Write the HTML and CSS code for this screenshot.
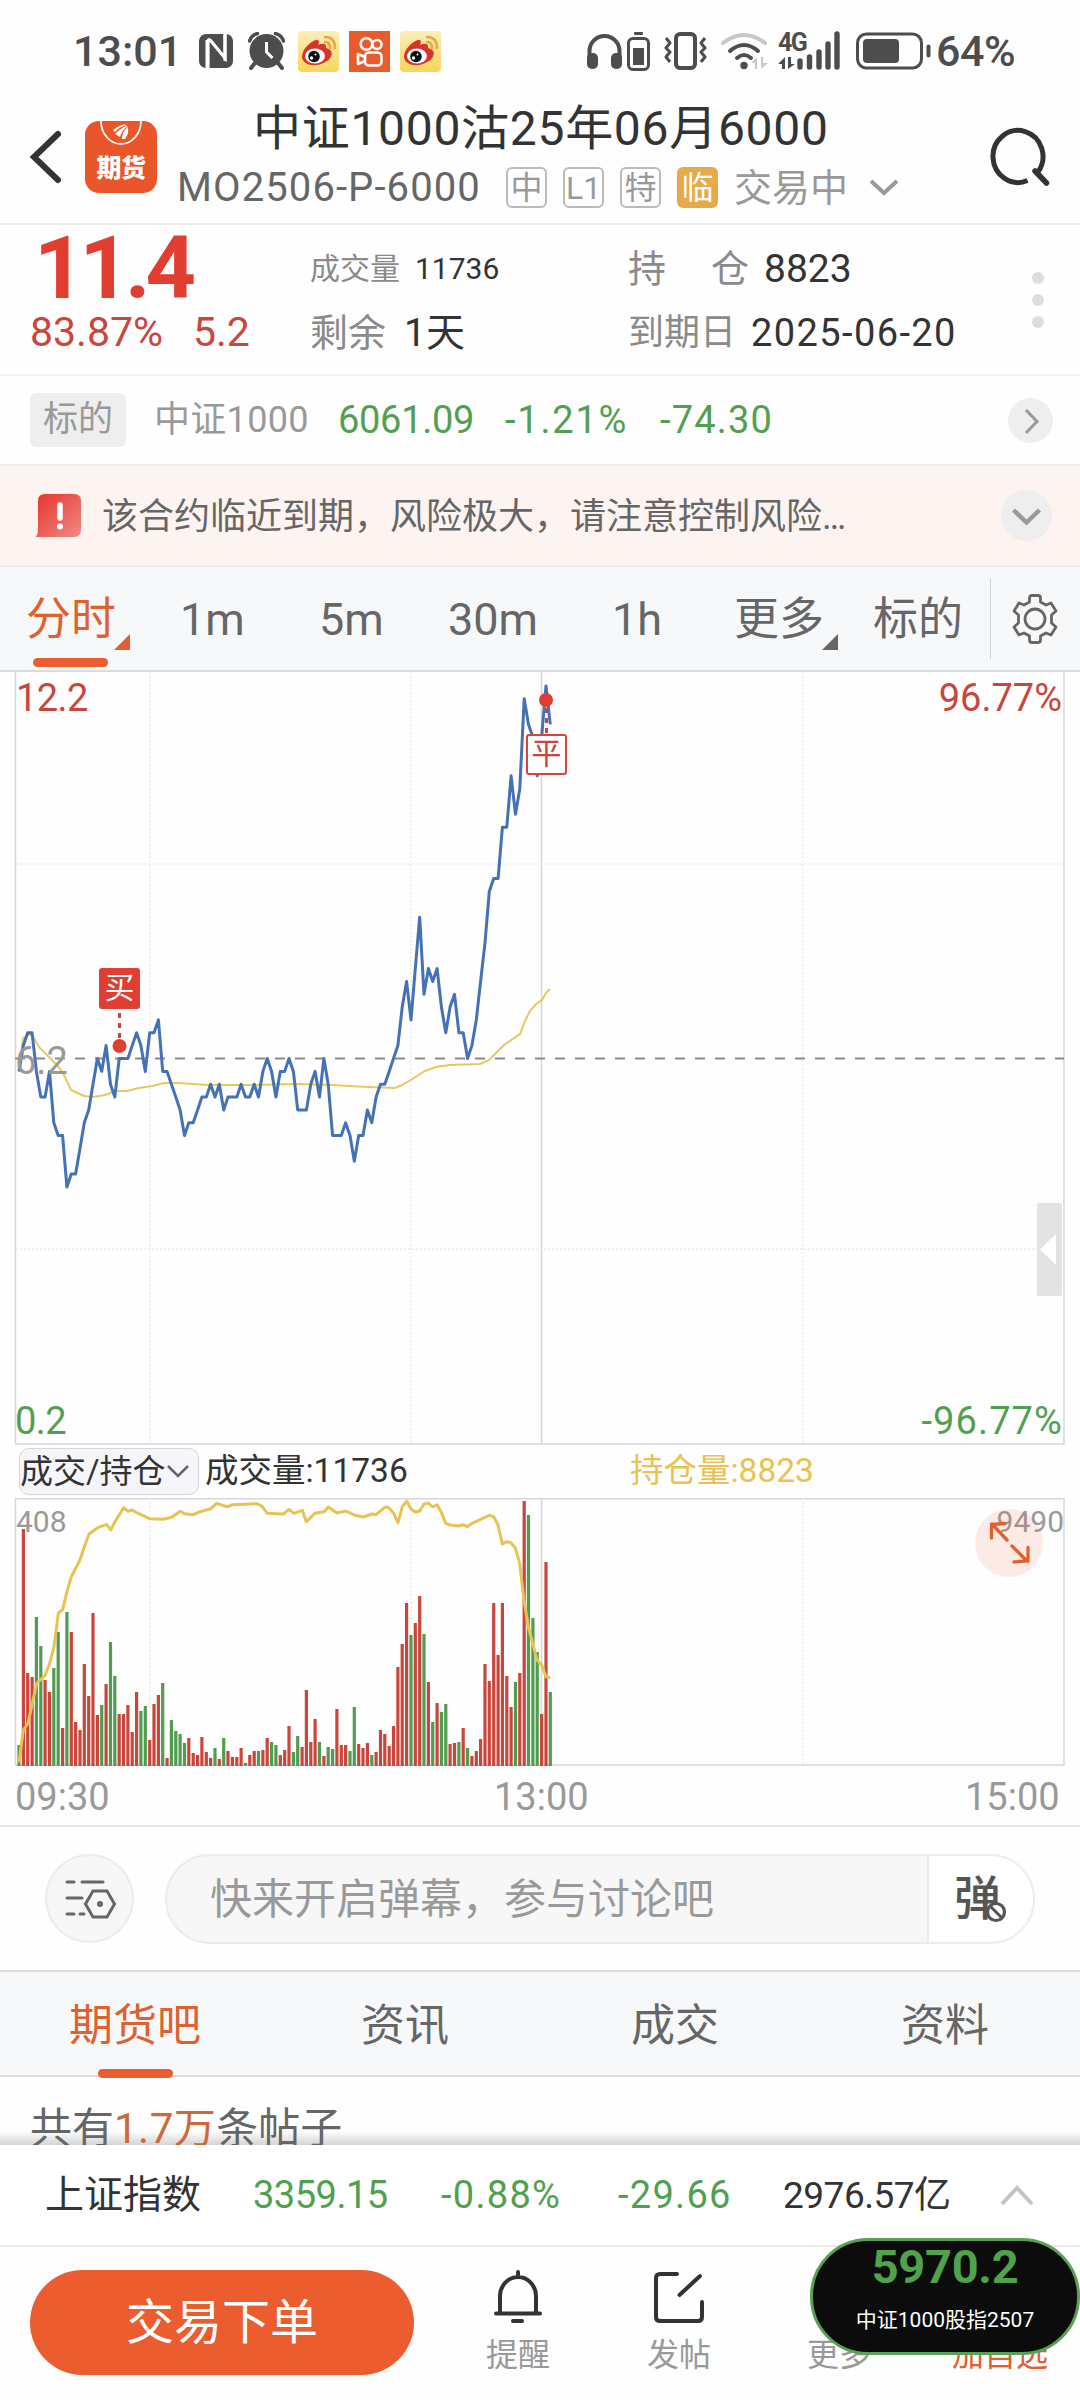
FILE: index.html
```html
<!DOCTYPE html>
<html lang="zh-CN">

<head>
    <meta charset="utf-8">
    <title>中证1000沽25年06月6000</title>
    <link rel="stylesheet" href="styles.css">
</head>

<body>
    <div class="phone">

        <div class="status-bar">
            <span class="clock">13:01</span>
            <svg class="nfc" width="34" height="36" viewBox="0 0 34 36">
                <rect x="0" y="1" width="34" height="34" rx="7" fill="#4d4d4d" />
                <path d="M9 36V9q0-4 3-1l14 17V0" fill="none" stroke="#fff" stroke-width="3.2" />
                <path d="M8 35V7M26 1v27" fill="none" stroke="#fff" stroke-width="3" />
                <path d="M13 17l8 10" stroke="#4d4d4d" stroke-width="3" />
            </svg>
            <svg class="alarm" width="37" height="38" viewBox="0 0 37 38">
                <circle cx="18.500" cy="19" r="17" fill="#4d4d4d" />
                <path d="M1.500 9q2-6 8-7.500M35.500 9q-2-6-8-7.500" fill="none" stroke="#4d4d4d" stroke-width="3.500" stroke-linecap="round" />
                <path d="M7 31l-4 5M30 31l4 5" stroke="#4d4d4d" stroke-width="4" stroke-linecap="round" />
                <path d="M18.500 10v10l6 6" fill="none" stroke="#fff" stroke-width="3" />
            </svg>
            <svg class="app" width="41" height="41" viewBox="0 0 41 41">
                <defs>
                    <linearGradient id="weiboBg" x1="0" y1="0" x2="0" y2="1">
                        <stop offset="0" stop-color="#fbeeb8" />
                        <stop offset="1" stop-color="#f8d65a" />
                    </linearGradient>
                </defs>
                <g id="weibo">
                    <rect width="41" height="41" rx="4" fill="url(#weiboBg)" />
                    <path d="M4 26C4 18 13 10 18 9c4-1 3 4 2 5 4-2 9-2 8 3 9 2 6 10 1 13C19 37 5 35 4 26z" fill="#d8352a" />
                    <ellipse cx="17" cy="25" rx="10" ry="7.500" fill="#fff" />
                    <circle cx="16" cy="25.500" r="5.800" fill="#111" />
                    <circle cx="13.500" cy="27" r="1.700" fill="#fff" />
                    <circle cx="17.500" cy="23.500" r="1" fill="#fff" />
                    <path d="M27 6q10 0 10 11M27 11q5 0 5 6" fill="none" stroke="#eba73f" stroke-width="2.500" stroke-linecap="round" />
                </g>
            </svg>
            <svg class="app" width="41" height="41" viewBox="0 0 41 41">
                <rect width="41" height="41" fill="#ea5b2b" />
                <g fill="none" stroke="#fff" stroke-width="2.600">
                    <circle cx="17.500" cy="13" r="5.800" />
                    <circle cx="28" cy="13.500" r="4.500" />
                    <rect x="16" y="21.500" width="16.500" height="13" rx="4" />
                    <path d="M16 26l-7-3v10l7-3" stroke-linejoin="round" />
                </g>
            </svg>
            <svg class="app" width="41" height="41" viewBox="0 0 41 41">
                <use href="#weibo" />
            </svg>
            <span class="spacer"></span>
            <svg class="phones" width="63" height="40" viewBox="0 0 63 40">
                <path d="M2.500 28V20a15 15 0 0 1 30 0v8" fill="none" stroke="#4d4d4d" stroke-width="4" />
                <rect x="0" y="22" width="11" height="16" rx="5" fill="#4d4d4d" />
                <rect x="24" y="22" width="11" height="16" rx="5" fill="#4d4d4d" />
                <rect x="41.500" y="7.500" width="20" height="31" rx="4.500" fill="none" stroke="#4d4d4d" stroke-width="3" />
                <rect x="46" y="17" width="11" height="17" fill="#4d4d4d" />
                <rect x="47" y="1" width="9" height="3" rx="1" fill="#4d4d4d" />
            </svg>
            <svg class="vibrate" width="43" height="40" viewBox="0 0 43 40">
                <rect x="12" y="3" width="19" height="34" rx="4" fill="none" stroke="#4d4d4d" stroke-width="4" />
                <path d="M2 7l4 5-4 5 4 4-4 5 4 5M41 7l-4 5 4 5-4 4 4 5-4 5" fill="none" stroke="#4d4d4d" stroke-width="3" stroke-linejoin="round" />
            </svg>
            <svg class="wifi" width="47" height="40" viewBox="0 0 47 40">
                <path d="M2 12Q23 -4 44 12" fill="none" stroke="#c8c8c8" stroke-width="4" stroke-linecap="round" />
                <path d="M9 20Q23 8 37 20M16 27Q23 21 30 27" fill="none" stroke="#4d4d4d" stroke-width="4" stroke-linecap="round" />
                <circle cx="23" cy="34.500" r="3.700" fill="#4d4d4d" />
                <path d="M30 32l6-6v12h-2v-6zM47 32l-7 6V26h2v6z" fill="#c8c8c8" />
            </svg>
            <div class="network">
                <span>4G</span>
                <svg width="63" height="40" viewBox="0 0 63 40">
                    <path d="M0 33l7-7v12H4v-5zM17 33l-7 5V26h3v7z" fill="#4d4d4d" />
                    <path d="M22 36v-6M31.500 36V26M41 36V21M50 36V13M59 36V3" stroke="#4d4d4d" stroke-width="5.400" stroke-linecap="round" />
                </svg>
            </div>
            <svg class="battery" width="75" height="40" viewBox="0 0 75 40">
                <rect x="1.500" y="3" width="64" height="34" rx="9" fill="none" stroke="#4d4d4d" stroke-width="3" />
                <rect x="7" y="8" width="36" height="24" rx="4" fill="#4d4d4d" />
                <path d="M72.500 15.500v9" stroke="#4d4d4d" stroke-width="4" stroke-linecap="round" />
            </svg>
            <span class="percent">64%</span>
        </div>

        <div class="header">
            <svg class="back" width="34" height="58" viewBox="0 0 34 58">
                <path d="M29 6L5 29l24 23" fill="none" stroke="#333" stroke-width="6" stroke-linecap="round" />
            </svg>
            <div class="logo">
                <svg width="72" height="26" viewBox="0 0 72 26">
                    <path d="M16 0a20 23 0 0 0 40 0" fill="none" stroke="#fff" stroke-width="1.800" />
                    <path d="M28 9q10-7 14-5-8 2-12 7zM30 13q8-8 13-8-6 4-8 11zM37 18q0-8 6-12 1 7-3 12z" fill="#fff" />
                </svg>
                <span>期货</span>
            </div>
            <div class="titles">
                <div class="title">中证1000沽25年06月6000</div>
                <div class="subtitle">
                    <span class="code">MO2506-P-6000</span>
                    <span class="tag">中</span>
                    <span class="tag">L1</span>
                    <span class="tag">特</span>
                    <span class="tag tag-fill">临</span>
                    <span class="state">交易中</span>
                    <svg width="30" height="20" viewBox="0 0 30 20">
                        <path d="M2 3l13 12L28 3" fill="none" stroke="#999" stroke-width="4" />
                    </svg>
                </div>
            </div>
            <svg class="search" width="60" height="60" viewBox="0 0 60 60">
                <path d="M37.500 53.500A25 26 0 1 1 48 45" fill="none" stroke="#333" stroke-width="5" />
                <path d="M45 44l11.500 12" stroke="#333" stroke-width="5.500" stroke-linecap="round" />
            </svg>
        </div>

        <div class="quote">
            <div class="quote-price">
                <div class="price">11.4</div>
                <div class="change"><span>83.87%</span><span>5.2</span></div>
            </div>
            <div class="quote-col">
                <div class="small"><label>成交量</label><b>11736</b></div>
                <div class="mid"><label>剩余</label><b>1天</b></div>
            </div>
            <div class="quote-col">
                <div class="mid"><label class="wide">持<i></i>仓</label><b>8823</b></div>
                <div class="date"><label>到期日</label><b>2025-06-20</b></div>
            </div>
            <div class="dots"><i></i><i></i><i></i></div>
        </div>

        <div class="underlying">
            <span class="chip">标的</span>
            <span class="name">中证1000</span>
            <span class="green u1">6061.09</span>
            <span class="green u2">-1.21%</span>
            <span class="green u3">-74.30</span>
            <svg width="45" height="45" viewBox="0 0 45 45">
                <circle cx="22.500" cy="22.500" r="22.500" fill="#eee" />
                <path d="M18 12l11 11.500L18 35" fill="none" stroke="#999" stroke-width="3" />
            </svg>
        </div>

        <div class="warning">
            <svg width="46" height="43" viewBox="0 0 46 43">
                <defs>
                    <linearGradient id="warn" x1="0" y1="0" x2="1" y2="1">
                        <stop offset="0.100" stop-color="#e83c33" />
                        <stop offset="1" stop-color="#f08a87" />
                    </linearGradient>
                </defs>
                <path d="M0 43q2-3 2-8V7q0-7 7-7h29q7 0 7 7v29q0 7-7 7z" fill="url(#warn)" />
                <path d="M24 11v13" stroke="#fff" stroke-width="5.500" stroke-linecap="round" />
                <circle cx="24" cy="32.500" r="3" fill="#fff" />
            </svg>
            <span>该合约临近到期，风险极大，请注意控制风险…</span>
            <svg width="51" height="51" viewBox="0 0 51 51">
                <circle cx="25.500" cy="25.500" r="25.500" fill="#eee" />
                <path d="M12.500 20l13 12.500 13-12.500" fill="none" stroke="#999" stroke-width="4.500" />
            </svg>
        </div>

        <div class="periods">
            <span class="active corner">分时</span>
            <span>1m</span>
            <span>5m</span>
            <span>30m</span>
            <span>1h</span>
            <span class="corner">更多</span>
            <span>标的</span>
            <svg width="46" height="50" viewBox="0 0 46 50">
                <path d="M17.500 8V4q0-2.500 2.500-2.500h6q2.500 0 2.500 2.500v4l5.500 3 5-2 5 8-4.500 4v8l4.500 4-5 8-5-2-5.500 3v4q0 2.500-2.500 2.500h-6q-2.500 0-2.500-2.500v-4l-5.500-3-5 2-5-8 4.500-4v-8l-4.500-4 5-8 5 2z" fill="none" stroke="#666" stroke-width="2.800" stroke-linejoin="round" />
                <circle cx="23" cy="25" r="10" fill="none" stroke="#666" stroke-width="2.800" />
            </svg>
        </div>

        <div class="price-chart">
            <svg width="1080" height="773" viewBox="0 0 1080 773">
                <g fill="none" stroke="#e0e0e0" stroke-width="1.500">
                    <path d="M15.500 0V772M1064 0V772M541.500 0V772" stroke="#d6d7d9" />
                    <path d="M15 772H1065" stroke-width="2" />
                    <path d="M150 0V772M411 0V772M803 0V772M16 192H1064M16 577H1064" stroke="#ececec" stroke-dasharray="2 2" />
                </g>
                <path d="M15 386.500H1064" stroke="#8a8a8a" stroke-width="2" stroke-dasharray="10 10" />
                <polyline id="avgLine" fill="none" stroke="#e8c95f" stroke-width="2" />
                <polyline id="priceLine" fill="none" stroke="#4472b4" stroke-width="3" stroke-linejoin="round" />
                <path d="M119.500 341v28M546.500 36v26" stroke="#c9463d" stroke-width="3" stroke-dasharray="5 5" />
                <circle cx="119.500" cy="374" r="7" fill="#e23d31" />
                <circle cx="546" cy="28" r="7" fill="#e23d31" />
            </svg>
            <span class="label top-left">12.2</span>
            <span class="label top-right">96.77%</span>
            <span class="label middle">6.2</span>
            <span class="label bottom-left">0.2</span>
            <span class="label bottom-right">-96.77%</span>
            <span class="mark buy">买</span>
            <span class="mark close">平</span>
            <svg class="handle" width="25" height="93" viewBox="0 0 25 93">
                <rect width="25" height="93" rx="2" fill="#e3e3e3" />
                <path d="M3 46.500L19 31v31z" fill="#fff" />
            </svg>
        </div>

        <div class="legend">
            <span class="picker">成交/持仓<svg width="24" height="16" viewBox="0 0 24 16">
                    <path d="M2 2l10 10L22 2" fill="none" stroke="#666" stroke-width="2.500" />
                </svg></span>
            <span class="vol">成交量:11736</span>
            <span class="oi">持仓量:8823</span>
        </div>

        <div class="volume-chart">
            <svg width="1080" height="269" viewBox="0 0 1080 269">
                <g fill="none" stroke="#d6d7d9" stroke-width="1.500">
                    <path d="M15.500 0V267M1064 0V267M541.500 0V267M15 .800H1065M15 267H1065" />
                    <path d="M150 0V267M411 0V267M803 0V267" stroke="#ececec" stroke-dasharray="2 2" />
                </g>
                <path id="redBars" stroke="#c9463d" stroke-width="3.200" />
                <path id="greenBars" stroke="#509c50" stroke-width="3.200" />
                <polyline id="oiLine" fill="none" stroke="#e8c352" stroke-width="3" stroke-linejoin="round" />
            </svg>
            <span class="label vol-max">408</span>
            <span class="label oi-max">9490</span>
            <svg class="expand" width="68" height="68" viewBox="0 0 68 68">
                <circle cx="34" cy="34" r="34" fill="#eb5d2f" fill-opacity="0.120" />
                <path d="M32 31L17 15M16.500 29V15.500L30 14.500M37 37l15 15M53 38.500V52l-14 .800" fill="none" stroke="#e0602f" stroke-width="3.300" stroke-linecap="round" />
            </svg>
        </div>

        <div class="axis">
            <span>09:30</span>
            <span>13:00</span>
            <span>15:00</span>
        </div>

        <div class="discuss">
            <div class="round">
                <svg width="52" height="40" viewBox="0 0 52 40">
                    <g fill="none" stroke="#666" stroke-width="3" stroke-linecap="round">
                        <path d="M2 3h7M17 3h21M2 19h15M2 35h7M15 35h4" />
                        <path d="M28 12h14l7.500 13L42 38H28l-7.500-13z" />
                    </g>
                    <circle cx="35" cy="25" r="3" fill="#666" />
                </svg>
            </div>
            <div class="input">
                <span>快来开启弹幕，参与讨论吧</span>
                <div class="danmu">弹
                    <svg width="22" height="22" viewBox="0 0 22 22">
                        <circle cx="11" cy="11" r="8.500" fill="#fff" stroke="#555" stroke-width="3.200" />
                        <path d="M5 5l12 12" stroke="#555" stroke-width="3" />
                    </svg>
                </div>
            </div>
        </div>

        <div class="tabs">
            <span class="active">期货吧</span>
            <span>资讯</span>
            <span>成交</span>
            <span>资料</span>
        </div>

        <div class="posts">共有<em>1.7万</em>条帖子</div>

        <div class="index-bar">
            <span class="index-name">上证指数</span>
            <span class="green">3359.15</span>
            <span class="green signed">-0.88%</span>
            <span class="green signed">-29.66</span>
            <span class="amount">2976.57亿</span>
            <svg width="34" height="22" viewBox="0 0 34 22">
                <path d="M2 20L17 4l15 16" fill="none" stroke="#c4c4c4" stroke-width="4" />
            </svg>
        </div>

        <div class="actions">
            <div class="trade">交易下单</div>
            <div class="action">
                <svg width="50" height="54" viewBox="0 0 50 54">
                    <g fill="none" stroke="#333" stroke-width="4" stroke-linecap="round">
                        <path d="M25 2v5M7 43V26a18 19 0 0 1 36 0v17M3 43.500h44" />
                        <path d="M20 51h9" />
                    </g>
                </svg>
                <span>提醒</span>
            </div>
            <div class="action">
                <svg width="50" height="54" viewBox="0 0 50 54">
                    <path d="M23 4H6Q2 4 2 8v39q0 4 4 4h38q4 0 4-4V32M25.500 25L46 6" fill="none" stroke="#333" stroke-width="4" stroke-linecap="round" />
                </svg>
                <span>发帖</span>
            </div>
            <div class="action">
                <svg width="50" height="54"></svg>
                <span>更多</span>
            </div>
            <div class="action orange">
                <svg width="50" height="54"></svg>
                <span>加自选</span>
            </div>
        </div>

        <div class="float">
            <strong>5970.2</strong>
            <span>中证1000股指2507</span>
        </div>
    </div>
    <script src="script.js"></script>
</body>

</html>
```

FILE: styles.css
```css
body {
    margin: 0;
    background: #fefefe;
    font-family: Roboto, "Noto Sans CJK SC", sans-serif;
    line-height: 1;
    color: #333;
}

.phone {
    position: relative;
    width: 1080px;
    height: 2400px;
    overflow: hidden;
}

.phone div {
    box-sizing: border-box;
}

svg {
    display: block;
    flex: none;
}

span,
label {
    white-space: nowrap;
}

.green {
    color: #50a050;
}

/* status bar */
.status-bar {
    display: flex;
    align-items: center;
    height: 102px;
    padding: 0 66px 0 73px;
    color: #4d4d4d;
    font-size: 43px;
    font-weight: 500;
}

.clock {
    width: 126px;
}

.alarm {
    margin: 0 13px 0 15px;
}

.app {
    margin-right: 10px;
}

.spacer {
    flex: 1;
}

.vibrate {
    margin: 0 14px;
}

.network {
    position: relative;
    margin: 0 15px 0 10px;
}

.network span {
    position: absolute;
    left: 0;
    top: -1px;
    font-size: 25px;
    font-weight: 700;
    letter-spacing: -1.5px;
}

.percent {
    width: 78px;
    margin-left: 5px;
    letter-spacing: -0.5px;
}

/* header */
.header {
    display: flex;
    height: 123px;
    border-bottom: 2px solid #ececec;
}

.back {
    margin: 26px 22px 0 29px;
}

.logo {
    width: 72px;
    height: 72px;
    margin-top: 19px;
    border-radius: 14px;
    background: #ea5529;
    color: #fff;
}

.logo span {
    display: block;
    margin-top: 9px;
    text-align: center;
    font-size: 25px;
    font-weight: 900;
    letter-spacing: -0.5px;
}

.titles {
    width: 760px;
    margin-left: 20px;
}

.title {
    margin: 3px 0 14px 76px;
    font-size: 48px;
    letter-spacing: 0.7px;
}

.subtitle {
    display: flex;
    align-items: center;
    color: #999;
}

.code {
    width: 329px;
    color: #666;
    font-size: 40px;
    letter-spacing: 1.1px;
}

.tag {
    box-sizing: border-box;
    width: 41px;
    height: 41px;
    margin-right: 16px;
    border: 2px solid #bbb;
    border-radius: 6px;
    text-align: center;
    font-size: 32px;
    line-height: 38px;
}

.tag-fill {
    border-color: #e8a948;
    background: #e8a948;
    color: #fff;
}

.state {
    width: 135px;
    font-size: 38px;
}

.search {
    margin: 25px 0 0 53px;
}

/* quote */
.quote {
    position: relative;
    display: grid;
    grid-template-columns: 280px 318px 400px 80px;
    height: 151px;
    padding-left: 30px;
    border-bottom: 2px solid #f2f2f2;
}

.price {
    margin: -1px 0 1px 4px;
    color: #e23d31;
    font-size: 88px;
    font-weight: 700;
    line-height: 87px;
    letter-spacing: -5px;
}

.change {
    display: flex;
    color: #c9463d;
    font-size: 41px;
}

.change span:first-child {
    width: 163px;
}

.quote-col > div {
    display: flex;
    align-items: center;
    height: 64px;
}

.quote-col {
    padding-top: 12px;
}

.quote-col label {
    color: #8a8a8a;
}

.quote-col b {
    font-weight: 400;
}

.small label,
.small b {
    width: 105px;
    font-size: 30px;
}

.mid label {
    width: 94px;
    font-size: 38px;
}

.mid b {
    font-size: 39px;
}

.mid .wide {
    display: flex;
    width: 136px;
    font-size: 38px;
}

.wide i {
    width: 45px;
}

.date label {
    width: 123px;
    font-size: 36px;
}

.date b {
    font-size: 38px;
    letter-spacing: 1.4px;
}

.dots {
    display: flex;
    flex-direction: column;
    gap: 10px;
    margin: 47px 0 0 4px;
}

.dots i {
    width: 12px;
    height: 12px;
    border-radius: 50%;
    background: #ddd;
}

/* underlying */
.underlying {
    display: grid;
    grid-template-columns: 124px 184px 167px 155px 348px 60px;
    align-items: center;
    height: 90px;
    padding-left: 30px;
    border-bottom: 2px solid #ececec;
    font-size: 38px;
}

.chip {
    width: 96px;
    height: 54px;
    border-radius: 6px;
    background: #eee;
    color: #999;
    text-align: center;
    font-size: 35px;
    line-height: 54px;
}

.name {
    color: #999;
    font-size: 36px;
    letter-spacing: 0.3px;
}

.u1 {
    letter-spacing: -0.3px;
}

.u2 {
    letter-spacing: 1.8px;
}

.u3 {
    letter-spacing: 1.2px;
}

/* warning */
.warning {
    display: flex;
    align-items: center;
    height: 101px;
    padding: 0 28px 0 36px;
    border-bottom: 2px solid #ececec;
    background: #fdf3f0;
    color: #666;
    font-size: 36px;
}

.warning span {
    width: 900px;
    margin-left: 20px;
    padding-top: 3px;
}

/* period tabs */
.periods {
    display: grid;
    grid-template-columns: 154px 139px 129px 164px 122px 139px 138px 40px;
    align-items: center;
    height: 105px;
    padding-left: 26px;
    border-bottom: 2px solid #d9dbde;
    background: #f7f8fa;
    color: #666;
    font-size: 45px;
}

.periods span {
    position: relative;
    padding-top: 2px;
}

.periods .active {
    color: #e0602f;
}

.periods .active::before {
    content: "";
    position: absolute;
    left: 7px;
    top: 63px;
    width: 75px;
    height: 9px;
    border-radius: 5px;
    background: #eb5d2f;
}

.corner::after {
    content: "";
    position: absolute;
    left: 88px;
    top: 39px;
    border-bottom: 16px solid;
    border-left: 16px solid transparent;
}

.periods svg {
    position: relative;
    left: 1px;
}

.periods span:nth-child(7)::after {
    content: "";
    position: absolute;
    left: 117px;
    top: -17px;
    width: 1px;
    height: 81px;
    background: #d0d2d5;
}

/* charts */
.price-chart {
    position: relative;
    height: 773px;
}

.label {
    position: absolute;
    font-size: 38px;
}

.top-left {
    left: 16px;
    top: 7px;
    color: #c9463d;
    letter-spacing: -0.6px;
}

.top-right {
    right: 18px;
    top: 7px;
    color: #c9463d;
}

.middle {
    left: 15px;
    top: 370px;
    color: #999;
}

.bottom-left {
    left: 15px;
    top: 730px;
    color: #50a050;
    letter-spacing: -0.6px;
}

.bottom-right {
    right: 17px;
    top: 730px;
    color: #50a050;
    letter-spacing: 1.1px;
}

.mark {
    position: absolute;
    box-sizing: border-box;
    width: 41px;
    height: 41px;
    border: 2px solid #d9433a;
    border-radius: 3px;
    text-align: center;
    font-size: 30px;
    line-height: 36px;
}

.buy {
    left: 99px;
    top: 296px;
    background: #e23d31;
    color: #fff;
}

.close {
    left: 526px;
    top: 62px;
    background: #fff;
    color: #c9463d;
}

.handle {
    position: absolute;
    left: 1037px;
    top: 531px;
}

.legend {
    display: flex;
    align-items: center;
    height: 53px;
    padding-left: 19px;
}

.picker {
    box-sizing: border-box;
    display: flex;
    align-items: center;
    width: 180px;
    height: 47px;
    border: 1px solid #d3d6de;
    border-radius: 10px;
    background: #f5f6f9;
    font-size: 33px;
}

.vol {
    width: 425px;
    margin-left: 6px;
    padding-bottom: 2px;
    font-size: 33.5px;
}

.oi {
    padding-bottom: 2px;
    color: #e8c352;
    font-size: 33.5px;
}

.volume-chart {
    position: relative;
    height: 269px;
}

.vol-max {
    left: 16px;
    top: 9px;
    color: #999;
    font-size: 30px;
}

.oi-max {
    right: 16px;
    top: 9px;
    color: #999;
    font-size: 30px;
}

.expand {
    position: absolute;
    left: 975px;
    top: 11px;
}

.axis {
    display: grid;
    grid-template-columns: 479px 471px 100px;
    height: 60px;
    padding: 11px 15px 0;
    border-bottom: 2px solid #e6e6e6;
    color: #999;
    font-size: 38px;
}

/* discussion */
.discuss {
    display: flex;
    gap: 31px;
    height: 143px;
    padding: 27px 45px 0;
}

.round {
    display: flex;
    align-items: center;
    justify-content: center;
    width: 89px;
    height: 89px;
    padding-left: 3px;
    border: 2px solid #ececec;
    border-radius: 50%;
    background: #f7f7f7;
}

.input {
    display: flex;
    width: 870px;
    height: 90px;
    overflow: hidden;
    border: 2px solid #ececec;
    border-radius: 45px;
    background: #f7f7f7;
    color: #999;
    font-size: 42px;
    line-height: 88px;
}

.input span {
    width: 760px;
    padding-left: 43px;
    box-sizing: border-box;
}

.danmu {
    position: relative;
    flex: 1;
    padding-left: 25px;
    border-left: 2px solid #ececec;
    background: #fff;
    color: #555;
    font-size: 47px;
    font-weight: 500;
    line-height: 85px;
}

.danmu svg {
    position: absolute;
    left: 56px;
    top: 45px;
}

.tabs {
    display: grid;
    grid-template-columns: repeat(4, 1fr);
    height: 107px;
    border-top: 2px solid #dcdddf;
    border-bottom: 2px solid #dcdddf;
    background: #f7f8fa;
    color: #666;
    text-align: center;
    font-size: 44px;
    line-height: 108px;
}

.tabs .active {
    position: relative;
    color: #e0602f;
}

.tabs .active::after {
    content: "";
    position: absolute;
    left: 98px;
    bottom: 2px;
    width: 75px;
    height: 9px;
    border-radius: 5px;
    background: #eb5d2f;
}

.posts {
    height: 68px;
    padding: 31px 0 0 30px;
    overflow: hidden;
    background: linear-gradient(transparent 54px, #d4d4d4);
    color: #666;
    font-size: 42px;
}

.posts em {
    color: #d0673a;
    font-style: normal;
    letter-spacing: 0.5px;
}

/* bottom bars */
.index-bar {
    display: grid;
    grid-template-columns: 208px 188px 177px 165px 217px 40px;
    align-items: center;
    height: 102px;
    padding-left: 45px;
    border-bottom: 2px solid #ececec;
    background: #fff;
    font-size: 38px;
    letter-spacing: -0.5px;
}

.index-name {
    font-size: 39px;
    letter-spacing: 0;
}

.signed {
    letter-spacing: 1.3px;
}

.amount {
    font-size: 37px;
}

.actions {
    display: grid;
    grid-template-columns: 384px 208px 114px 206px 116px;
    padding: 23px 0 0 30px;
}

.trade {
    height: 105px;
    border-radius: 53px;
    background: #eb5d2f;
    color: #fff;
    text-align: center;
    font-size: 48px;
    line-height: 105px;
}

.action {
    display: flex;
    flex-direction: column;
    align-items: center;
    color: #999;
    font-size: 32px;
}

.action span {
    margin-top: 15px;
}

.orange {
    color: #e0602f;
}

.float {
    position: absolute;
    left: 810px;
    top: 2238px;
    display: flex;
    flex-direction: column;
    align-items: center;
    width: 270px;
    height: 117px;
    padding-top: 2px;
    border: 3px solid #58a155;
    border-radius: 58px;
    background: #0c0c0c;
    color: #fff;
    font-size: 21px;
}

.float strong {
    margin-bottom: 20px;
    color: #50a24c;
    font-size: 47px;
    letter-spacing: -0.3px;
}
```

FILE: script.js
```javascript
var STEP = 4.355;
var FIRST_X = 19;

// price per minute, in ticks of 0.2 from the previous settlement
var ticks = [
    -1, 1, 2, 2, -1, -3, -3, -1, -5, -6, -6, -10, -9, -9, -7, -5, -4, -2, 0, -1,
    1, -2, -3, 0, 0, 0, 1, 2, 1, -1, 2, 2, 3, -1, -1, -2, -3, -4, -6, -5,
    -5, -4, -3, -3, -2, -3, -2, -4, -3, -3, -3, -2, -3, -3, -2, -3, -1, 0, -1, -3,
    -1, -1, 0, -1, -4, -4, -4, -2, -1, -3, 0, -2, -6, -6, -6, -5, -6, -8, -6, -6,
    -4, -5, -3, -2, -2, -1, 0, 1, 4, 6, 3, 7, 11, 5, 7, 6, 7, 4, 2, 4,
    5, 2, 2, 0, 1, 3, 6, 9, 13, 14, 14, 18, 18, 22, 19, 21, 28, 26, 25, 22,
    25, 29, 26
];

// bar heights; negative bars are green
var bars = [
    -21, 237, 93, 89, -149, -120, 86, 74, -98, -134, 38, -154, 134, 44, 36, 102, 70, 153, 51, -61,
    82, -124, -90, 52, 52, 61, 34, 74, -55, -60, 26, 62, 71, -83, 8, -46, -35, -32, -23, 28,
    13, 11, 29, 14, 8, -18, 7, -28, 15, 9, 9, 18, -3, 11, 15, -15, 16, 28, -24, -21,
    11, 16, 40, -14, -30, 19, 76, 24, 47, -24, 10, -19, -17, 57, 21, 21, -15, -59, 22, 18,
    23, -11, 14, 36, 32, 20, 40, 99, 122, 163, -131, 143, 170, -132, 84, -44, 63, -54, -62, 22,
    23, -24, 38, -18, 10, 15, 27, 102, 85, 163, 111, 163, 90, 59, -84, 93, 265, -251, -148, -114,
    52, 204, -74
];

var average = [
    [19, 399], [23, 366], [28, 363], [32, 363], [39, 375], [50, 386], [57, 393], [63, 401], [71, 418], [84, 424],
    [93, 425], [105, 423], [116, 419], [127, 419], [139, 416], [152, 414], [164, 411], [179, 411], [207, 413],
    [250, 413], [296, 412], [332, 413], [350, 414], [368, 415], [395, 416], [402, 413], [414, 406], [425, 399],
    [436, 395], [450, 393], [480, 392], [489, 388], [496, 381], [504, 373], [520, 362], [525, 349], [530, 339],
    [536, 332], [542, 328], [546, 321], [550, 317]
];

// open interest, in thirds of a pixel
var interest = [
    [57, 793], [70, 696], [84, 676], [97, 616], [110, 556], [136, 531], [149, 496], [162, 446], [175, 346], [188, 334],
    [201, 281], [214, 236], [240, 186], [253, 146], [267, 108], [293, 89], [320, 79], [332, 96], [345, 71], [371, 29],
    [384, 40], [397, 36], [410, 44], [423, 50], [449, 62], [489, 64], [515, 58], [541, 40], [554, 47], [580, 50],
    [600, 41], [632, 32], [650, 16], [671, 23], [684, 26], [697, 20], [770, 17], [785, 24], [802, 46], [850, 48],
    [867, 34], [882, 46], [907, 37], [919, 71], [945, 46], [972, 41], [985, 27], [1011, 45], [1037, 39], [1065, 52],
    [1090, 57], [1115, 48], [1128, 50], [1154, 28], [1165, 28], [1180, 44], [1194, 74], [1207, 26], [1220, 10],
    [1233, 33], [1246, 42], [1259, 39], [1272, 18], [1285, 15], [1298, 27], [1311, 20], [1324, 43], [1337, 76],
    [1350, 81], [1376, 84], [1389, 80], [1402, 86], [1416, 76], [1442, 64], [1468, 52], [1481, 56], [1494, 81],
    [1507, 138], [1520, 131], [1533, 134], [1546, 150], [1559, 196], [1572, 306], [1585, 386], [1598, 436],
    [1611, 486], [1625, 501], [1638, 536], [1651, 539]
];

function x(i) {
    return (FIRST_X + i * STEP).toFixed(1);
}

function setPoints(id, points) {
    document.getElementById(id).setAttribute('points', points.join(' '));
}

setPoints('priceLine', ticks.map(function (t, i) {
    return x(i) + ',' + (386.5 - t * 12.85).toFixed(1);
}));

setPoints('avgLine', average);

setPoints('oiLine', interest.map(function (p) {
    return (p[0] / 3).toFixed(1) + ',' + (p[1] / 3).toFixed(1);
}));

var red = '';
var green = '';
for (var i = 0; i < bars.length; i++) {
    var d = 'M' + x(i) + ' 268v' + -Math.abs(bars[i]);
    if (bars[i] > 0) {
        red += d;
    } else {
        green += d;
    }
}
document.getElementById('redBars').setAttribute('d', red);
document.getElementById('greenBars').setAttribute('d', green);
```
